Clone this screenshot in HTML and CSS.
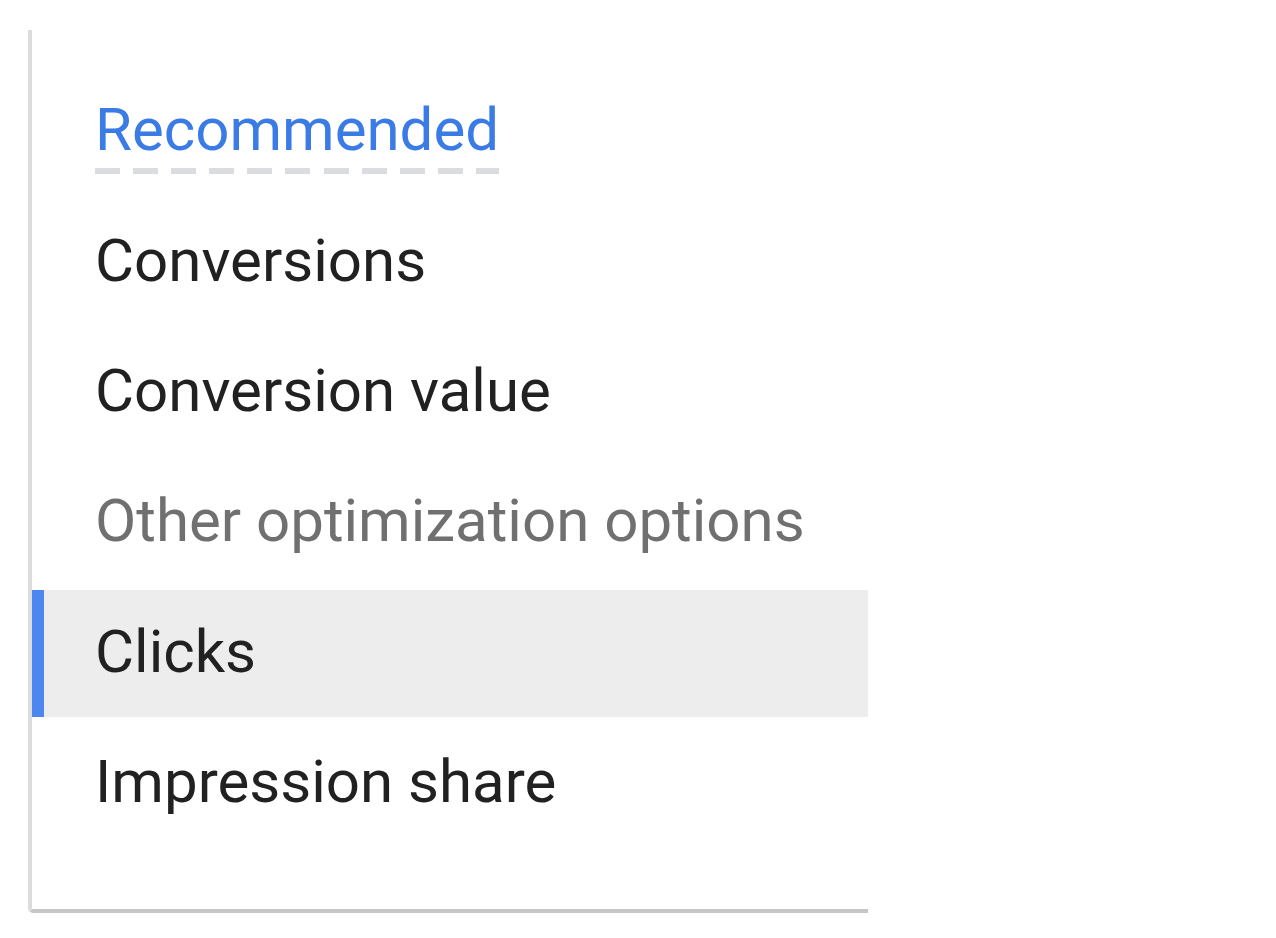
FILE: index.html
```html
<!DOCTYPE html>
<html lang="en">
<head>
<meta charset="utf-8">
<title>Bid strategy menu</title>
<link rel="stylesheet" href="styles.css">
</head>
<body>
  <div class="menu">
    <div class="menu-header"><span class="menu-header-label">Recommended</span></div>
    <ul class="menu-list">
      <li class="menu-item">Conversions</li>
      <li class="menu-item">Conversion value</li>
      <li class="menu-item menu-item-muted">Other optimization options</li>
      <li class="menu-item menu-item-selected">Clicks</li>
      <li class="menu-item">Impression share</li>
    </ul>
  </div>
</body>
</html>
```
FILE: styles.css
```css
html, body {
  margin: 0;
  padding: 0;
  background: #ffffff;
}

body {
  font-family: Roboto, "Liberation Sans", Arial, sans-serif;
  color: #212121;
  padding-top: 30px;
}

.menu {
  box-sizing: border-box;
  width: 840px;
  height: 883px;
  margin-left: 28px;
  background: #ffffff;
  border-left: 4px solid #dcdcdc;
  border-bottom: 4px solid #c6c6c6;
  border-bottom-left-radius: 5px;
}

.menu-header {
  display: flex;
  padding: 65px 0 22px 63px;
}

.menu-header-label {
  font-size: 60px;
  line-height: 70px;
  padding-bottom: 9px;
  color: #3b7be6;
  background-image: repeating-linear-gradient(to right, #dadce0 0 25px, transparent 25px 38.1px);
  background-repeat: no-repeat;
  background-position: left bottom;
  background-size: 100% 6px;
}

.menu-list {
  list-style: none;
  margin: 0;
  padding: 0;
}

.menu-item {
  font-size: 60px;
  line-height: 130px;
  height: 130px;
  padding-left: 63px;
  white-space: nowrap;
  color: #212121;
}

.menu-item-muted {
  color: #707070;
}

.menu-item-selected {
  margin-top: 4px;
  height: auto;
  line-height: 123px;
  padding-bottom: 4px;
  padding-left: 51px;
  border-left: 12px solid #4d86ee;
  background: #ededed;
}
```
